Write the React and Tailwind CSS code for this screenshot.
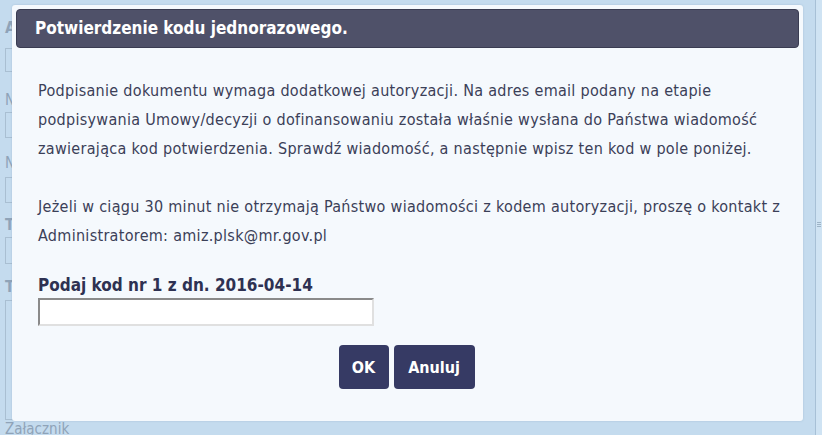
import React from "react";

const font = { fontFamily: '"DejaVu Sans Condensed", "DejaVu Sans", sans-serif' };

export default function App() {
  return (
    <div
      className="relative w-[822px] h-[435px] overflow-hidden bg-[#c4dbee] flex"
      style={font}
    >
      {/* background page (mostly hidden by the dialog) */}
      <div className="flex-1 flex flex-col pl-[5px] pt-[18px] text-[#8fa3b8]">
        <div className="flex flex-col">
          <div className="text-[16px] leading-[20px] font-bold">A</div>
          <div className="mt-[10px] h-[24px] w-[300px] border border-[#a9bfd2]" />
          <div className="mt-[20px] text-[15px] leading-[16px]">N</div>
          <div className="mt-[4px] h-[26px] w-[300px] border border-[#a9bfd2]" />
          <div className="mt-[17px] text-[15px] leading-[16px]">N</div>
          <div className="mt-[6px] h-[26px] w-[300px] border border-[#a9bfd2]" />
          <div className="mt-[14px] text-[15px] leading-[16px] font-bold">T</div>
          <div className="mt-[4px] h-[27px] w-[300px] border border-[#a9bfd2]" />
          <div className="mt-[15px] text-[15px] leading-[16px] font-bold">T</div>
          <div className="mt-[5px] h-[120px] w-[300px] border border-[#a9bfd2]" />
        </div>
        <div className="mt-[1px] text-[15px] leading-[16px]">Załącznik</div>
      </div>
      <div className="w-[7px] h-full border-l border-[#a7c0d6] bg-[#cfe3f3] flex items-start justify-center pt-[222px]">
        <div className="flex flex-col gap-[1px]">
          <div className="w-[4px] h-[1px] bg-[#9db3c6]" />
          <div className="w-[4px] h-[1px] bg-[#9db3c6]" />
          <div className="w-[4px] h-[1px] bg-[#9db3c6]" />
        </div>
      </div>

      {/* dialog overlay */}
      <div className="absolute left-[12px] top-[5px] w-[791px] h-[416px] bg-[#f5f9fd] rounded-[3px] p-[4px] shadow-[0_0_2px_rgba(120,150,180,0.4)]">
        <div className="h-[39px] rounded-[4px] bg-[#4f5169] border border-[#3a3c52] flex items-center pl-[18px]">
          <span className="text-white font-bold text-[17px]">Potwierdzenie kodu jednorazowego.</span>
        </div>
        <div className="pl-[22px] pr-[16px] pt-[28px] text-[#3b4058] text-[16px] leading-[29px] tracking-[0.3px]">
          <p>
            Podpisanie dokumentu wymaga dodatkowej autoryzacji. Na adres email podany na etapie
            podpisywania Umowy/decyzji o dofinansowaniu została właśnie wysłana do Państwa wiadomość
            zawierająca kod potwierdzenia. Sprawdź wiadomość, a następnie wpisz ten kod w pole poniżej.
          </p>
          <p className="mt-[29px]">
            Jeżeli w ciągu 30 minut nie otrzymają Państwo wiadomości z kodem autoryzacji, proszę o kontakt z
            Administratorem: amiz.plsk@mr.gov.pl
          </p>
          <div className="mt-[25px] font-bold text-[#2e3152] text-[17px] leading-[20px] tracking-normal">
            Podaj kod nr 1 z dn. 2016-04-14
          </div>
          <input
            type="text"
            className="mt-[3px] block w-[336px] h-[28px] bg-white border-2 border-t-[#8a8a8a] border-l-[#8a8a8a] border-b-[#e0e0e0] border-r-[#e0e0e0] outline-none"
          />
          <div className="mt-[19px] flex justify-center gap-[5px] pl-[4px] pr-[12px] tracking-normal">
            <button className="w-[50px] h-[44px] rounded-[4px] bg-[#363a64] text-white font-bold text-[16px]">OK</button>
            <button className="w-[81px] h-[44px] rounded-[4px] bg-[#363a64] text-white font-bold text-[16px]">Anuluj</button>
          </div>
        </div>
      </div>
    </div>
  );
}
